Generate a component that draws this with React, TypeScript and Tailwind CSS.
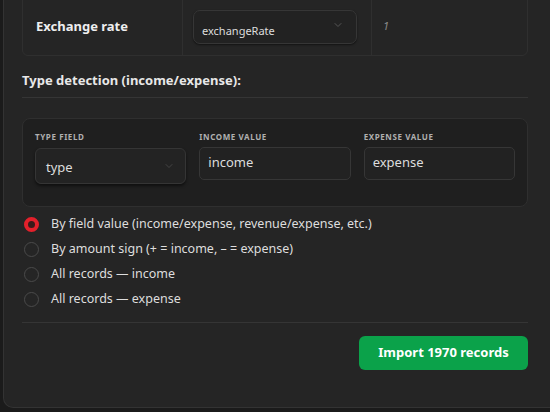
import React, { useState } from "react";

const options = [
  "By field value (income/expense, revenue/expense, etc.)",
  "By amount sign (+ = income, – = expense)",
  "All records — income",
  "All records — expense",
];

function Chevron({ className = "" }: { className?: string }) {
  return (
    <svg width="12" height="12" viewBox="0 0 24 24" fill="none" stroke="currentColor" strokeWidth="2" strokeLinecap="round" strokeLinejoin="round" className={className}>
      <path d="M6 9l6 6 6-6" />
    </svg>
  );
}

export default function App() {
  const [mode, setMode] = useState(0);

  return (
    <div className="h-[412px] w-[550px] overflow-hidden bg-[#1b1b1b] pl-[3px]" style={{ fontFamily: '"Noto Sans", sans-serif' }}>
      <div className="flex h-[408px] w-[560px] flex-col rounded-bl-[10px] border-l border-b border-[#333] bg-[#252525] pl-[18px] pr-[35px] text-[#e6e6e6]">
        {/* mapping table, last row */}
        <div className="mt-[-6px] grid h-[62px] grid-cols-[159px_189px_1fr] rounded-b-[6px] border border-[#2f2f2f]">
          <div className="flex items-center pl-[13px] pt-[4px] text-[13px] font-bold text-[#eee]">Exchange rate</div>
          <div className="flex items-center border-l border-[#2f2f2f] pl-[10px] pt-[4px]">
            <div className="flex h-[34px] w-[164px] items-center justify-between rounded-[7px] border border-[#363636] bg-[#222] pl-[8px] pr-[12px] shadow-[0_1px_2px_rgba(0,0,0,0.5)]">
              <span className="mt-[8px] text-[11px] text-[#ddd]">exchangeRate</span>
              <Chevron className="mt-[-4px] text-[#555]" />
            </div>
          </div>
          <div className="flex items-center border-l border-[#2f2f2f] pl-[11px] pt-[2px] text-[11px] italic text-[#888]">1</div>
        </div>

        <div className="mt-[15px] pb-[6px] text-[13px] font-bold text-[#e8e8e8]">Type detection (income/expense):</div>
        <div className="h-px bg-[#353535]" />

        {/* type field box */}
        <div className="mt-[20px] h-[89px] rounded-[8px] border border-[#2f2f2f] bg-[#1f1f1f] px-[12px] pt-[12px]">
          <div className="grid grid-cols-3 gap-[13px]">
            <div>
              <div className="text-[8px] font-bold uppercase tracking-[0.6px] text-[#b0b0b0]">Type field</div>
              <div className="mt-[5px] flex h-[36px] items-center justify-between rounded-[6px] border border-[#353535] bg-[#232323] pl-[10px] pr-[10px] shadow-[0_2px_3px_rgba(0,0,0,0.5)]">
                <span className="mt-[4px] text-[13px] text-[#ddd]">type</span>
                <Chevron className="text-[#444]" />
              </div>
            </div>
            <div>
              <div className="text-[8px] font-bold uppercase tracking-[0.6px] text-[#b0b0b0]">Income value</div>
              <div className="mt-[4px] flex h-[33px] items-center rounded-[5px] border border-[#363636] bg-[#222] pl-[8px] text-[13px] text-[#ddd]">income</div>
            </div>
            <div>
              <div className="text-[8px] font-bold uppercase tracking-[0.6px] text-[#b0b0b0]">Expense value</div>
              <div className="mt-[4px] flex h-[33px] items-center rounded-[5px] border border-[#363636] bg-[#222] pl-[8px] text-[13px] text-[#ddd]">expense</div>
            </div>
          </div>
        </div>

        {/* radios */}
        <div className="mt-[5px] flex flex-col">
          {options.map((o, i) => (
            <button key={o} onClick={() => setMode(i)} className="flex h-[25px] items-center gap-[12px] pl-[2px] text-left">
              {mode === i ? (
                <span className="h-[15px] w-[15px] rounded-full border-[4px] border-[#e3202b] bg-[#3a1a1a]" />
              ) : (
                <span className="h-[15px] w-[15px] rounded-full border border-[#4a4a4a]" />
              )}
              <span className="text-[12.5px] text-[#dedede]">{o}</span>
            </button>
          ))}
        </div>

        <div className="mt-[10px] h-px bg-[#353535]" />

        <div className="mt-[13px] flex justify-end">
          <button className="h-[34px] w-[169px] rounded-[6px] bg-[#0ba24a] text-[13px] font-bold text-white">Import 1970 records</button>
        </div>
      </div>
    </div>
  );
}
